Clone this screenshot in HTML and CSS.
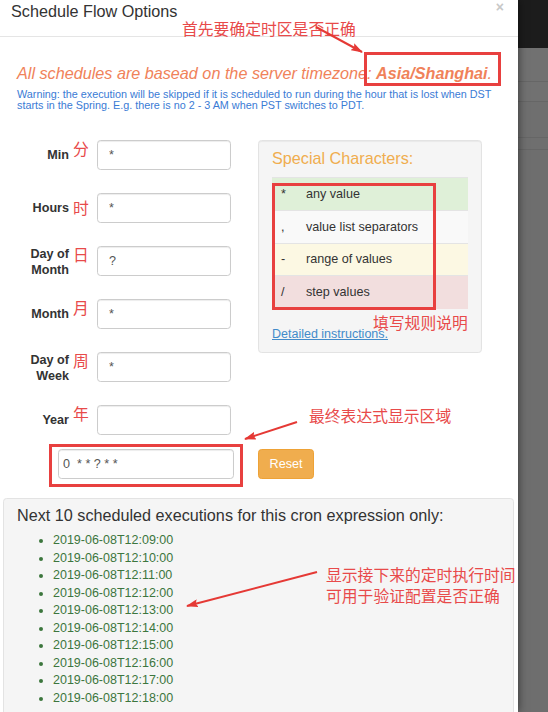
FILE: index.html
```html
<!DOCTYPE html>
<html lang="en">
<head>
<meta charset="utf-8">
<title>Schedule Flow Options</title>
<link rel="stylesheet" href="styles.css">
</head>
<body>
<div class="page">
  <div class="modal">
    <div class="modal-header">
      <h4 class="modal-title">Schedule Flow Options</h4>
      <span class="close">&times;</span>
    </div>
    <div class="modal-body">
      <p class="tz">All schedules are basead on the server timezone: <b>Asia/Shanghai</b>.</p>
      <p class="warn">Warning: the execution will be skipped if it is scheduled to run during the hour that is lost when DST starts in the Spring. E.g. there is no 2 - 3 AM when PST switches to PDT.</p>

      <div class="form-area">
        <div class="fields">
          <div class="field"><label>Min</label><span class="cn">分</span><input type="text" value="*"></div>
          <div class="field"><label>Hours</label><span class="cn low">时</span><input type="text" value="*"></div>
          <div class="field"><label>Day of<br>Month</label><span class="cn">日</span><input type="text" value="?"></div>
          <div class="field"><label>Month</label><span class="cn">月</span><input type="text" value="*"></div>
          <div class="field"><label>Day of<br>Week</label><span class="cn">周</span><input type="text" value="*"></div>
          <div class="field"><label>Year</label><span class="cn">年</span><input type="text" value=""></div>
        </div>

        <div class="special">
          <h4 class="special-title">Special Characters:</h4>
          <table class="chars">
            <tr class="row-success"><td class="sym">*</td><td class="desc">any value</td></tr>
            <tr class="row-plain"><td class="sym">,</td><td class="desc">value list separators</td></tr>
            <tr class="row-warning"><td class="sym">-</td><td class="desc">range of values</td></tr>
            <tr class="row-danger"><td class="sym">/</td><td class="desc">step values</td></tr>
          </table>
          <a class="details" href="#">Detailed instructions.</a>
        </div>
      </div>

      <div class="cron-row">
        <div class="cron-mark"><input class="cron" type="text" value="0  * * ? * *"></div>
        <button class="btn-reset" type="button">Reset</button>
      </div>

      <div class="next">
        <h4 class="next-title">Next 10 scheduled executions for this cron expression only:</h4>
        <ul class="runs">
          <li>2019-06-08T12:09:00</li>
          <li>2019-06-08T12:10:00</li>
          <li>2019-06-08T12:11:00</li>
          <li>2019-06-08T12:12:00</li>
          <li>2019-06-08T12:13:00</li>
          <li>2019-06-08T12:14:00</li>
          <li>2019-06-08T12:15:00</li>
          <li>2019-06-08T12:16:00</li>
          <li>2019-06-08T12:17:00</li>
          <li>2019-06-08T12:18:00</li>
        </ul>
      </div>
    </div>
  </div>

  <div class="backdrop">
    <div class="bd-top"></div>
    <div class="bd-band bd-b1"></div>
    <div class="bd-band bd-b2"></div>
    <div class="bd-band bd-b3"></div>
    <div class="bd-band bd-b4"></div>
    <div class="bd-rest"></div>
  </div>

  <div class="notes">
    <div class="mark mark-tz"></div>
    <div class="mark mark-table"></div>
    <div class="note note-tz">首先要确定时区是否正确</div>
    <div class="note note-cron">最终表达式显示区域</div>
    <div class="note note-rules">填写规则说明</div>
    <div class="note note-next">显示接下来的定时执行时间<br>可用于验证配置是否正确</div>
    <svg class="arrows" width="548" height="712" viewBox="0 0 548 712">
      <defs>
        <marker id="ah" markerWidth="12" markerHeight="8" refX="11" refY="4" orient="auto" markerUnits="userSpaceOnUse">
          <path d="M0,0 L12,4 L0,8 L2,4 z" fill="#e53935"/>
        </marker>
      </defs>
      <line x1="316" y1="27" x2="362" y2="52" stroke="#e53935" stroke-width="2" marker-end="url(#ah)"/>
      <line x1="297" y1="422" x2="245" y2="439" stroke="#e53935" stroke-width="2" marker-end="url(#ah)"/>
      <line x1="317" y1="572" x2="187" y2="606" stroke="#e53935" stroke-width="2" marker-end="url(#ah)"/>
    </svg>
  </div>
</div>
</body>
</html>
```

FILE: styles.css
```css
* { box-sizing: border-box; }

html, body {
  margin: 0;
  padding: 0;
}

body {
  width: 548px;
  height: 712px;
  overflow: hidden;
  font-family: "Liberation Sans", Arial, "Noto Sans CJK SC", sans-serif;
  font-size: 12.6px;
  color: #333;
  background: #6e6e6e;
}

.page {
  position: relative;
  display: flex;
  width: 548px;
  height: 712px;
}

/* ---------- modal ---------- */
.modal {
  position: relative;
  z-index: 1;
  flex: none;
  width: 518px;
  height: 712px;
  overflow: hidden;
  background: #fff;
  box-shadow: 0 0 9px rgba(0, 0, 0, 0.55);
}

.modal-header {
  display: flex;
  height: 37px;
  padding: 0 12px 0 11px;
  border-bottom: 1px solid #e5e5e5;
}

.modal-title {
  margin: 0;
  padding-top: 2px;
  font-size: 16.2px;
  font-weight: normal;
  line-height: 18px;
  color: #333;
}

.close {
  margin-left: auto;
  margin-top: 0;
  margin-right: 2px;
  font-size: 14px;
  font-weight: bold;
  line-height: 14px;
  color: #c8c8c8;
}

.tz {
  margin: 26px 0 0 17px;
  font-size: 16.2px;
  line-height: 20px;
  font-style: italic;
  color: #f0825a;
}

.tz b { font-weight: bold; }

.warn {
  margin: 6px 16px 0 17px;
  font-size: 10.8px;
  line-height: 11px;
  color: #3a7bd5;
}

/* ---------- form ---------- */
.form-area {
  display: grid;
  grid-template-columns: 258px 224px;
  align-items: start;
  margin-top: 29px;
}

.fields {
  display: flex;
  flex-direction: column;
  gap: 23px;
}

.field {
  display: grid;
  grid-template-columns: 69px 28px 134px;
  height: 30px;
}

.field label {
  align-self: center;
  text-align: right;
  font-weight: bold;
  line-height: 16px;
  color: #333;
}

.cn {
  align-self: start;
  margin-top: 1px;
  padding-left: 4px;
  font-family: "Noto Sans CJK SC", sans-serif;
  font-size: 15.8px;
  line-height: 16px;
  color: #e84a4a;
}

.cn.low { margin-top: 7px; }

.field input,
.cron {
  height: 30px;
  border: 1px solid #ccc;
  border-radius: 3.6px;
  font-family: "Liberation Sans", Arial, sans-serif;
  font-size: 12.6px;
  color: #555;
  background: #fff;
  box-shadow: inset 0 1px 1px rgba(0, 0, 0, 0.075);
  outline: none;
}

.field input {
  width: 134px;
  padding: 0 11px;
}

/* ---------- special characters ---------- */
.special {
  height: 213px;
  padding: 7px 13px 10px;
  background: #f5f5f5;
  border: 1px solid #e3e3e3;
  border-radius: 3.6px;
  box-shadow: inset 0 1px 1px rgba(0, 0, 0, 0.05);
}

.special-title {
  margin: 0;
  font-size: 16.2px;
  font-weight: normal;
  line-height: 20px;
  color: #f0ad4e;
}

.chars {
  width: 100%;
  margin-top: 9px;
  border-collapse: collapse;
  table-layout: fixed;
}

.chars td {
  height: 32.75px;
  border-top: 1px solid #e4e4e4;
  vertical-align: middle;
  font-size: 12.6px;
  color: #333;
}

.chars td.sym { width: 34px; padding: 0 0 0 9px; }
.chars td.desc { padding: 0; }

.row-success td { background: #dff0d8; }
.row-plain td { background: #f9f9f9; }
.row-warning td { background: #fcf8e3; }
.row-danger td { background: #f2dede; }

.details {
  display: block;
  margin-top: 16px;
  font-size: 12.5px;
  line-height: 18px;
  color: #428bca;
  text-decoration: underline;
}

/* ---------- cron row ---------- */
.cron-row {
  display: flex;
  align-items: flex-start;
  gap: 15px;
  margin-top: 9px;
  padding-left: 49px;
}

.cron-mark {
  width: 194px;
  padding: 2px 6px 5px;
  border: 3px solid #e8403f;
}

.cron {
  display: block;
  width: 176px;
  padding: 0 4px;
  white-space: pre;
}

.btn-reset {
  width: 56px;
  height: 30px;
  margin-top: 5px;
  padding: 0;
  background: #f0ad4e;
  border: 1px solid #eea236;
  border-radius: 3.6px;
  font-family: "Liberation Sans", Arial, sans-serif;
  font-size: 12.6px;
  color: #fff;
}

/* ---------- next runs ---------- */
.next {
  width: 511px;
  height: 230px;
  margin: 11px 0 0 3px;
  padding: 6px 13px;
  background: #f5f5f5;
  border: 1px solid #e3e3e3;
  border-radius: 3.6px;
}

.next-title {
  margin: 0;
  font-size: 16.2px;
  font-weight: normal;
  line-height: 20px;
  color: #333;
}

.runs {
  margin: 7px 0 0;
  padding-left: 36px;
  list-style: disc;
  color: #3c763d;
}

.runs li {
  font-size: 12.5px;
  line-height: 17.55px;
}

/* ---------- backdrop ---------- */
.backdrop {
  flex: 1;
  display: flex;
  flex-direction: column;
}

.bd-top { height: 48px; background: #1c1c1c; }
.bd-band { background: #717171; border-bottom: 1px solid #666; }
.bd-b1 { height: 34px; }
.bd-b2 { height: 20px; }
.bd-b3 { height: 36px; background: #6f6f6f; }
.bd-b4 { height: 12px; background: #6f6f6f; }
.bd-rest { flex: 1; background: #6e6e6e; }

/* ---------- annotations ---------- */
.notes {
  position: absolute;
  inset: 0;
  z-index: 5;
  pointer-events: none;
}

.arrows {
  position: absolute;
  left: 0;
  top: 0;
}

.mark {
  position: absolute;
  border: 3px solid #e8403f;
}

.mark-tz { left: 364px; top: 52px; width: 137px; height: 34px; }
.mark-table { left: 272px; top: 183px; width: 164px; height: 127px; }

.note {
  position: absolute;
  font-family: "Noto Sans CJK SC", sans-serif;
  font-size: 15.8px;
  line-height: 16px;
  color: #e84a4a;
  white-space: nowrap;
}

.note-tz { left: 182px; top: 21px; }
.note-cron { left: 309px; top: 408px; }
.note-rules { left: 373px; top: 315px; }
.note-next { left: 326px; top: 564px; line-height: 21px; }
```
